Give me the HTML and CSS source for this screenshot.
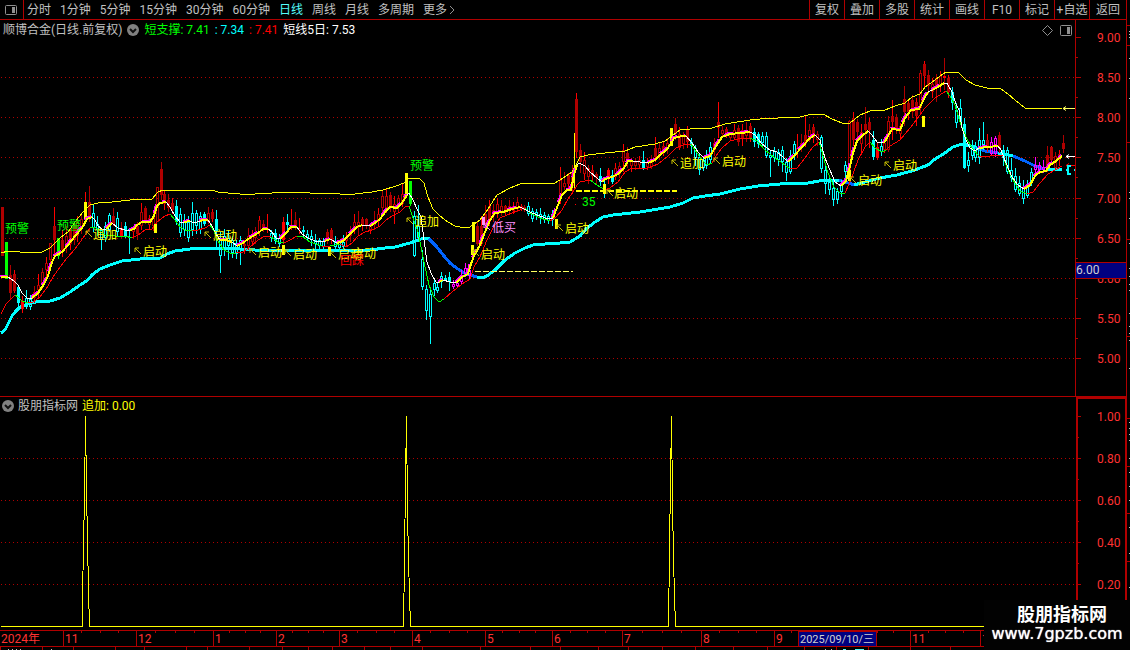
FILE: index.html
```html
<!DOCTYPE html>
<html lang="zh-CN">
<head>
<meta charset="utf-8">
<title>顺博合金 日线</title>
<link rel="stylesheet" href="styles.css">
</head>
<body>
<div class="app">
  <header class="toolbar">
    <button class="layout-btn" aria-label="布局">
      <svg width="12" height="12" viewBox="0 0 12 12"><rect x="0.5" y="1.5" width="11" height="9" rx="1" class="ico-line"/><rect x="7" y="3" width="3" height="6" class="ico-fill"/></svg>
    </button>
    <nav class="periods">
      <button>分时</button><button>1分钟</button><button>5分钟</button><button>15分钟</button><button>30分钟</button><button>60分钟</button><button class="active">日线</button><button>周线</button><button>月线</button><button>多周期</button><button class="more">更多<svg width="7" height="10" viewBox="0 0 7 10"><path d="M1 1L5 5L1 9" class="ico-line"/></svg></button>
    </nav>
    <nav class="tools">
      <button>复权</button><button>叠加</button><button>多股</button><button>统计</button><button>画线</button><button>F10</button><button>标记</button><button>+自选</button><button class="back">返回</button>
    </nav>
  </header>

  <section class="panel">
    <svg class="chart" id="price" viewBox="0 20 1130 377"></svg>
    <div class="info">
      <span>顺博合金(日线.前复权)</span>
      <svg class="drop" width="12" height="12" viewBox="0 0 12 12"><circle cx="6" cy="6" r="6"/><path d="M3 5L6 8L9 5"/></svg>
      <span class="green">短支撑: 7.41</span><span class="cyan">: 7.34</span><span class="red">: 7.41</span><span class="white">短线5日: 7.53</span>
      <span class="corner">
        <svg width="11" height="11" viewBox="0 0 11 11"><path d="M5.5 .5L10.5 5.5L5.5 10.5L.5 5.5Z" class="ico-line"/></svg>
        <svg width="12" height="11" viewBox="0 0 12 11"><rect x=".5" y=".5" width="11" height="10" rx="1" class="ico-line"/><rect x="7" y="2" width="3" height="7" class="ico-fill"/></svg>
      </span>
    </div>
  </section>

  <section class="panel">
    <svg class="chart" id="signal" viewBox="0 397 1130 233"></svg>
    <div class="info sub">
      <svg class="drop" width="12" height="12" viewBox="0 0 12 12"><circle cx="6" cy="6" r="6"/><path d="M3 5L6 8L9 5"/></svg>
      <span>股朋指标网</span><span class="yellow">追加: 0.00</span>
    </div>
  </section>

  <footer class="timeline"><svg class="chart" id="time" viewBox="0 630 1130 20"></svg></footer>

  <div class="brand"><strong>股朋指标网</strong><span>www.7gpzb.com</span></div>
</div>
<script src="chart.js"></script>
</body>
</html>
```
FILE: styles.css
```css
* { box-sizing: border-box; }
body { margin: 0; background: #000; color: #c0c0c0; font: 12px/18px Roboto, "Noto Sans CJK SC", sans-serif; }
button { margin: 0; padding: 0; border: 0; background: none; color: inherit; font: inherit; white-space: nowrap; }
.app { position: relative; height: 100vh; overflow: hidden; display: grid; grid-template-rows: 20px minmax(0, 377fr) minmax(0, 233fr) 20px; }

.toolbar { display: flex; border-bottom: 1px solid #b00000; margin-right: 3px; border-right: 1px solid #b00000; }
.layout-btn { width: 24px; padding-right: 2px; border-right: 1px solid #b00000; display: flex; align-items: center; justify-content: center; }
.periods { display: flex; gap: 9px; padding-left: 3px; }
.active { color: #54fcfc; }
.more { display: flex; align-items: center; gap: 2px; }
.tools { display: flex; margin-left: auto; }
.tools button { width: 35px; border-left: 1px solid #b00000; }
.tools .back { width: 37px; }
.ico-line { fill: none; stroke: #909090; }
.ico-fill { fill: #909090; }

.panel { display: grid; min-height: 0; }
.panel > * { grid-area: 1 / 1; min-height: 0; }
.chart { display: block; width: 100%; height: 100%; overflow: hidden; }
.info { display: flex; align-items: center; align-self: start; gap: 5px; height: 20px; padding: 0 58px 0 3px; }
.sub { gap: 4px; height: 17px; padding-left: 2px; }
.drop circle { fill: #808080; }
.drop path { fill: none; stroke: #101010; stroke-width: 2; }
.corner { display: flex; gap: 7px; margin-left: auto; }
.green { color: #00ff00; }
.cyan { color: #00ffff; }
.red { color: #ff0000; }
.white { color: #fff; }
.yellow { color: #ffff00; }
.timeline { min-height: 0; }

.lbl { font-size: 12px; dominant-baseline: central; }
.date { font-size: 11px; }
.brand { position: absolute; right: 0; bottom: 0; width: 146px; height: 50px; background: #020202; color: #fff; display: flex; flex-direction: column; align-items: center; padding-top: 5px; }
.brand strong { font-size: 18px; line-height: 20px; padding-left: 10px; }
.brand span { font: 16px/17px "DejaVu Sans", sans-serif; text-shadow: 0 0 1px #fff; }
```
FILE: chart.js
```js
const NS = 'http://www.w3.org/2000/svg';
const RED = '#b00000';
const COLORS = { r: RED, R: RED, B: '#ff0000', c: '#00ffff', C: '#00ffff', y: '#ffff00', g: '#00ff00', m: '#ff00ff' };

function add(svg, tag, attrs, text) {
  const el = document.createElementNS(NS, tag);
  for (const k in attrs) el.setAttribute(k, attrs[k]);
  if (text) el.textContent = text;
  svg.appendChild(el);
  return el;
}
const box = (s, x, y, w, h, fill) => add(s, 'rect', { x, y, width: w, height: h, fill });
const line = (s, pts, stroke, width = 1, extra = {}) =>
  add(s, 'polyline', { points: pts, fill: 'none', stroke, 'stroke-width': width, 'shape-rendering': 'crispEdges', ...extra });
const label = (s, x, y, text, fill, cls = 'lbl') => add(s, 'text', { x, y, fill, class: cls }, text);

const price = document.getElementById('price');
const signal = document.getElementById('signal');
const time = document.getElementById('time');

/* one entry per day: kind, high, body top, body bottom, low */
const days = `R207,207,256,256 g242,242,279,279 R265,275,293,300 R270,274,291,293 C285,287,303,306 B296,301,309,313 c290,298,307,309 c295,299,307,310 r286,292,298,303 r274,285,290,297
r268,272,284,289 r257,263,270,277 r243,243,260,264 R207,226,240,256 g238,238,256,259 R230,240,250,257 r226,236,246,253 R228,231,244,250 R222,226,240,245 r216,222,236,242
r213,219,228,234 y192,202,219,219 R186,202,218,222 c205,213,228,232 c216,224,230,236 c228,230,240,250 c222,226,238,242 c213,215,230,232 R208,216,224,226 c212,218,232,236
B222,228,236,238 C222,226,236,238 c228,229,231,254 r226,228,232,238 R222,226,234,240 r203,212,226,230 R206,208,221,224 r215,218,225,230 r212,216,226,231 r187,187,222,222
R162,169,195,200 R190,194,204,210 R194,200,208,212 R198,203,210,214 C200,206,222,225 c208,214,233,237 c214,222,230,236 c216,222,238,242 c202,213,230,236 c210,213,226,234
c212,216,230,234 C212,214,224,226 r207,213,222,224 R209,212,219,222 C210,219,231,247 c232,240,256,273 c229,236,248,256 c230,238,246,260 c236,240,253,258 c240,243,254,259
c236,240,250,265 r240,244,246,254 r228,236,246,250 r230,234,242,246 r227,232,238,244 r216,220,232,236 R220,224,229,232 r214,228,230,233 c230,233,238,242 C229,233,241,244
c234,238,244,247 B217,222,240,244 C214,222,225,232 B209,226,228,230 R212,220,226,230 B218,228,229,234 c226,230,232,238 c230,234,238,240 c230,236,240,246 c234,240,244,250
c238,240,246,250 c238,241,247,250 R229,232,241,244 R228,230,240,244 c236,241,247,249 c240,242,248,250 c235,242,247,250 r232,238,241,246 r226,232,236,242 r214,222,228,234
r211,222,227,236 R217,219,226,231 R218,219,226,229 r224,226,230,234 r211,222,225,230 r208,214,220,226 r190,196,208,214 r188,196,208,213 R192,195,206,212 r196,204,212,224
r195,198,207,212 r183,194,204,207 y173,173,196,196 g181,181,204,206 c211,216,256,257 c205,226,238,242 c250,259,287,290 c285,289,311,320 c290,294,317,344 c278,283,290,296
c283,287,291,293 c272,276,282,288 c275,278,279,281 C272,277,282,291 m280,284,287,289 m278,283,286,288 m270,275,282,285 m263,268,274,277 m268,270,276,280 y222,222,242,242
R222,226,244,246 R216,226,244,246 R205,214,224,230 R200,206,222,226 r204,210,216,222 r198,204,213,218 r200,206,212,216 R205,206,212,215 r200,206,210,213 R202,206,211,214
r197,202,209,212 r204,206,209,211 R205,207,210,212 c202,206,214,216 c208,211,219,222 c209,212,216,220 c208,214,218,224 c212,215,220,223 c214,216,221,224 c210,214,220,226
y219,219,228,228 r167,180,196,204 r172,183,187,190 R173,175,184,188 r165,172,186,193 R93,99,152,158 R144,150,162,173 r152,160,174,180 r165,168,177,184 R165,170,176,182
R172,174,178,184 C168,176,182,186 c181,186,190,198 B168,170,178,184 C170,175,182,184 r163,168,177,180 r162,166,174,178 r144,150,162,172 R147,153,162,168 r158,160,166,172
r158,162,166,170 r156,160,165,168 C151,160,168,170 r158,162,167,170 r155,160,167,169 R137,148,157,162 r143,148,156,160 R141,146,152,156 r138,143,148,154 y128,128,146,146
R118,124,134,140 R127,134,148,150 r132,136,144,149 R126,130,142,148 C138,142,146,154 c145,148,158,166 c154,157,170,175 c158,160,168,171 c150,156,166,169 c142,147,160,164
r138,143,150,156 R102,122,128,138 r126,130,134,138 R127,129,133,138 r132,134,138,140 r124,130,138,140 R125,128,142,146 R124,130,138,146 r122,130,136,142 R123,126,138,142
C128,132,142,147 C132,134,144,148 c132,136,143,148 c132,136,156,158 c150,155,158,177 c147,151,158,162 c149,152,160,166 c146,150,162,172 c158,162,173,181 c150,156,172,174
c141,144,154,160 r134,148,152,158 r134,143,148,152 R116,135,144,147 r124,130,140,142 R124,127,138,143 r131,134,140,146 c135,137,169,173 c165,170,184,194 c178,182,190,195
c180,188,200,206 c188,191,200,204 c180,184,192,197 c161,165,172,180 r120,121,180,182 R112,118,140,146 R119,122,132,140 r124,132,144,153 R107,124,130,146 R118,122,130,148
C131,140,157,160 B142,147,158,160 c139,146,152,156 r138,143,150,153 r116,121,150,152 R100,116,122,140 R114,117,130,134 r123,126,134,140 R86,99,112,126 R100,103,112,120
R95,100,112,118 R98,102,116,126 r70,73,108,114 R61,64,76,87 R70,75,86,94 r78,84,92,98 R74,78,88,102 r71,76,86,92 B58,76,78,90 R75,78,92,98
C87,92,103,110 c103,110,123,128 c99,108,122,124 C118,124,168,169 c152,160,166,172 c140,146,156,160 c142,146,158,162 c128,140,158,164 c122,140,145,150 R134,140,148,152
m137,142,154,156 m136,138,154,157 R132,135,148,153 C145,150,158,166 c147,150,172,174 c158,170,178,182 c168,176,190,192 c176,183,194,196 c180,188,199,204 c180,186,196,198
c168,172,183,186 m157,165,170,176 m162,165,170,174 m160,167,170,173 R146,155,168,172 R146,147,160,165 r152,156,168,170 r150,154,160,166 R135,143,149,153`.split(/\s+/);

function horizontalGrid(svg, rows, right) {
  for (const y of rows) {
    for (let x = 1; x < right; x += 4) box(svg, x, y, 1, 1, RED);
  }
}

/* price panel */
horizontalGrid(price, [77, 117, 157, 198, 238, 278, 318, 358], 1075);
line(price, '1,333 5,330 8,324 12,316 16,311 20,307 28,304 36,302 50,301 60,298 70,292 80,285 88,280 92,275 100,269 110,265 122,261 140,259 160,258 167,254 175,251 190,249 215,248 240,249 255,250 300,250 340,250 370,250 385,248 395,247 410,243 418,240 424,238 430,239', '#00ffff', 3);
line(price, '429,239 436,246 444,256 450,263 458,269 466,274 477,277', '#0064ff', 3);
line(price, '477,277 482,278 487,276 495,270 505,260 515,253 525,248 533,245 545,244 560,243 570,242 580,236 586,229 595,222 603,217 613,215 640,212 670,207 683,203 693,198 705,196 720,194 740,189 758,186 780,184 808,183 825,180 839,180', '#00ffff', 3);
line(price, '839,180 848,183 855,185', '#0064ff', 3);
line(price, '854,185 865,182 880,178 897,175 915,170 928,165 935,159 945,153 953,147 962,144 975,147', '#00ffff', 3);
line(price, '973,147 985,151 998,153', '#0064ff', 3);
line(price, '998,153 1009,155 1013,156', '#00ffff', 3);
line(price, '1013,156 1025,161 1035,166 1045,169', '#0064ff', 3);
line(price, '1046,169 1062,170', '#00ffff', 3);

days.forEach((d, i) => {
  const kind = d[0];
  const [hi, top, bottom, low] = d.slice(1).split(',').map(Number);
  const x = Math.round(2.3 + i * 3.956);
  const color = COLORS[kind];
  const wick = 'rRBy'.includes(kind) ? (i % 2 ? '#ff0000' : RED) : color;
  box(price, x, hi, 1, top - hi, wick);
  box(price, x, bottom, 1, low - bottom, wick);
  if ('rcm'.includes(kind)) {
    add(price, 'rect', { x: x - 0.5, y: top + 0.5, width: 2, height: Math.max(bottom - top - 1, 1), fill: 'none', stroke: color, 'shape-rendering': 'crispEdges' });
  } else {
    box(price, x - 1, top, 3, bottom - top, color);
  }
});
box(price, 574, 133, 1, 55, '#ffff00');
box(price, 482, 217, 3, 8, '#ff90ff');

line(price, '1,253 8,251 20,252 42,252 50,248 60,238 68,232 75,222 83,212 90,205 98,203 112,202 130,200 152,199 158,192 163,190 180,190 212,190 218,192 228,193 240,194 255,194 290,192 310,193 340,194 355,194 372,192 383,190 396,186 404,183 409,178 420,179 424,183 428,197 433,209 440,216 448,222 455,226 460,227 470,227 474,224 480,220 488,209 497,195 510,188 520,184 528,183 555,183 563,178 572,172 577,163 580,157 588,155 605,153 625,151 635,147 655,144 665,141 672,136 680,130 690,129 712,128 725,124 750,120 760,119 778,118 800,117 812,114 823,114 832,119 842,123 850,123 860,115 870,111 885,110 895,106 905,103 912,97 920,94 925,87 935,80 940,76 946,72 958,72 966,80 975,85 987,88 1001,89 1008,94 1015,100 1025,108 1040,108 1046,109 1062,108', '#ffff00');

/* support line: red while rising, green while falling */
const support = [
  'r1,314 6,304 10,300 15,295', 'g15,295 18,297 22,301 28,303', 'r28,303 33,302 40,297 48,286 53,277 60,267 67,258 75,249 83,238 90,228',
  'g90,228 95,227 100,231 105,235 115,236 125,236 132,238', 'r132,238 138,235 145,230 152,229 158,221 165,216 170,214', 'g170,214 175,220 180,227 185,230 192,230',
  'r192,230 198,230 205,228 210,225', 'g210,225 214,231 218,241 224,250 230,253 236,253', 'r236,253 243,252 250,247 258,240 265,236 271,237', 'g271,237 278,242 284,243',
  'r284,243 290,240 297,236', 'g297,236 303,237 310,242 316,244 322,246', 'r322,246 330,246', 'g330,246 340,244',
  'r340,244 346,247 352,243 358,236 365,232 372,230 380,226 386,220 392,216 400,212 405,207 409,206', 'g409,206 413,218 418,232 424,262 429,285 434,297 439,302 444,299',
  'r444,299 452,292 462,284 470,279 474,267 480,257 487,240 493,228 500,218 512,213 525,208', 'g525,208 530,213 540,218 550,221', 'r550,221 556,217 562,210 568,199 573,192 577,185 580,182 590,180',
  'g590,180 597,185 605,190', 'r605,190 610,188 618,182 625,172 632,168 648,168 658,164 668,156 676,148 685,144 691,144', 'g691,144 695,150 702,160 707,165 712,163',
  'r712,163 716,156 722,148 730,141 742,138 750,138', 'g750,138 757,141 765,150 775,158 785,165 790,169', 'r790,169 797,168 805,158 812,148 819,142',
  'g819,142 822,152 828,173 834,187 840,193 845,193', 'r845,193 850,182 858,160 865,147 870,142', 'g870,142 875,148 882,152 886,150', 'r886,150 890,146 900,140 910,128 917,119 925,108 935,98 946,91',
  'g946,91 950,96 955,105 960,122 966,137 972,148 979,156', 'r979,156 985,157 995,155 1003,155', 'g1003,155 1006,165 1013,180 1020,191 1027,194', 'r1027,194 1033,192 1040,183 1048,174 1055,170 1062,166'
];
support.forEach(s => line(price, s.slice(1), s[0] === 'r' ? '#ff0000' : '#00ff00'));

/* five-day line: yellow while rising, white while falling */
const fast = [
  'y1,277 8,277', 'w8,277 14,281 18,285 22,293 27,298 32,298', 'y32,298 38,293 44,284 48,276 52,262 55,256 62,252 68,245 75,236 82,228 87,219 92,217',
  'w92,217 95,220 98,226 102,229 106,229', 'y106,229 112,223', 'w112,223 118,228 125,230 130,230', 'y130,230 134,229 137,225 142,222 150,222 154,216 157,206 160,203 166,202',
  'w166,202 170,207 175,216 180,222 184,222', 'y184,222 190,221', 'w190,221 194,223 200,221', 'y200,221 203,220 208,220', 'w208,220 212,226 216,234 220,240', 'y220,240 226,240 232,242', 'w232,242 237,246',
  'y237,246 243,243 248,239 258,233 263,229 268,229', 'w268,229 272,232 276,238 280,239', 'y280,239 286,233 291,227 297,227', 'w297,227 302,234 308,238 315,241 325,241', 'y325,241 330,239', 'w330,239 337,243',
  'y337,243 343,241 350,234 357,227 362,225', 'w362,225 370,226', 'y370,226 375,223 380,219 386,211 390,207 397,208 402,203 407,195', 'w407,195 409,193 413,200 417,209 421,217 424,240 427,262 431,273 436,282 439,282',
  'y439,282 443,280', 'w443,280 450,282 456,283', 'y456,283 462,277 468,274 471,264 474,256 480,245 485,232 490,220 495,213 503,212 512,209 520,207', 'w520,207 526,210 532,213 540,216 548,219 553,218',
  'y553,218 556,210 562,195 567,190 571,190 574,175 577,165', 'w577,165 579,163 585,166 590,172 597,178 602,182', 'y602,182 605,179 612,177 618,174 624,168 628,161 633,161', 'w633,161 640,162 648,163',
  'y648,163 655,160 660,155 666,150 671,144 674,138 682,136 686,136', 'w686,136 692,143 698,152 704,158', 'y704,158 710,156 716,146 722,137 730,134 740,133 750,132', 'w750,132 755,135 762,144 770,150 777,152 783,157 788,162',
  'y788,162 795,155 802,147 810,138 815,135', 'w815,135 820,140 825,158 830,170 835,182 841,186', 'y841,186 846,181 850,166 853,153 857,141 862,136 868,131', 'w868,131 872,135 877,142 884,143',
  'y884,143 888,136 892,129 900,130 905,118 911,110 919,109 925,97 928,92', 'w928,92 932,90', 'y932,90 938,87 944,83', 'w944,83 947,83 952,92 956,104 959,110 962,128 966,140 970,148 975,151 979,148',
  'y979,148 988,147 998,146', 'w998,146 1001,150 1006,163 1012,177 1018,185 1024,189', 'y1024,189 1030,185 1035,176 1040,172 1046,171 1050,165 1056,161 1062,156'
];
fast.filter(s => s[0] === 'y').forEach(s => line(price, s.slice(1), '#ff00ff', 2, { 'stroke-dasharray': '9 7', transform: 'translate(-1 -1)' }));
fast.forEach(s => (s[0] === 'y' ? line(price, s.slice(1), '#ffff00', 2) : line(price, s.slice(1), '#ffffff', 1)));

/* signal bars and level lines */
[[154, 224, 9], [282, 245, 10], [328, 247, 9], [471, 245, 10], [555, 219, 10], [603, 184, 10], [848, 170, 11], [922, 116, 11]].forEach(([x, y, h]) => box(price, x, y, 3, h, '#ffff00'));
line(price, '475,271.5 573,271.5', '#ffff60', 1, { 'stroke-dasharray': '6 2' });
line(price, '576,191 677,191', '#ffff00', 2, { 'stroke-dasharray': '6 2' });
box(price, 575, 204, 1, 1, '#ff0000');

/* marks: text, text x, centre y, colour, arrow x, arrow y */
[
  ['预警', 5, 229, '#00ff00'], ['预警', 57, 226, '#00ff00'], ['预警', 410, 166, '#00ff00'], ['35', 582, 202, '#00ff00'],
  ['追加', 93, 235, '#ffff00', 86, 231], ['启动', 143, 252, '#ffff00', 135, 248], ['启动', 213, 236, '#ffff00', 205, 232],
  ['启动', 258, 253, '#ffff00', 250, 249], ['启动', 293, 255, '#ffff00', 285, 250], ['启动', 338, 255, '#ffff00', 330, 252],
  ['启动', 352, 254, '#ffff00'], ['回踩', 340, 261, '#ff0000'], ['追加', 415, 222, '#ffff00', 407, 218],
  ['低买', 492, 228, '#ff90ff', 484, 224], ['启动', 481, 255, '#ffff00', 473, 250], ['启动', 565, 229, '#ffff00', 557, 225],
  ['启动', 614, 194, '#ffff00', 607, 190], ['追加', 680, 164, '#ffff00', 672, 160], ['启动', 722, 162, '#ffff00', 714, 158],
  ['启动', 858, 181, '#ffff00', 850, 177], ['启动', 893, 166, '#ffff00', 885, 162]
].forEach(([text, x, y, color, ax, ay]) => {
  label(price, x, y, text, color);
  if (ax) add(price, 'path', { d: `M${ax} ${ay + 4}V${ay}H${ax + 4}M${ax} ${ay}L${ax + 6} ${ay + 6}`, fill: 'none', stroke: color === '#ffff00' ? '#c8c000' : color });
});

/* last-value arrows */
[[108.5, '#ffff60', 1063], [156.5, '#ffffff', 1066], [165.5, '#ff0000', 1066]].forEach(([y, c, x]) =>
  add(price, 'path', { d: `M1075 ${y}H${x}M${x + 3} ${y - 2}L${x} ${y}L${x + 3} ${y + 2}`, fill: 'none', stroke: c }));
add(price, 'path', { d: 'M1071 166H1068V174H1071M1066 170H1068M1074 170H1075', fill: 'none', stroke: '#00ffff', 'stroke-width': 2 });

/* price axis */
box(price, 1075, 20, 1, 376, RED);
[37, 77, 117, 157, 198, 238, 278, 318, 358].forEach((y, i) => {
  box(price, 1076, y, 5, 1, RED);
  if (i < 8) box(price, 1076, y + 20, 2, 1, RED);
  label(price, 1097, y + 1, (9 - i * 0.5).toFixed(2), '#ff3232');
});
box(price, 1075, 262, 52, 17, RED);
box(price, 1076, 263, 50, 15, '#000080');
label(price, 1076, 270, '6.00', '#d0d0d0');
box(price, 0, 396, 1127, 1, RED);
box(price, 1126, 20, 1, 376, RED);
[25, 45, 142, 239, 336].forEach(y => box(price, 1127, y, 3, 1, RED));
[31, 34, 37, 58, 78, 98, 192, 198, 218, 243, 268, 276, 284, 290, 313, 326, 333, 340, 368].forEach(y => box(price, 1129, y, 1, 1, '#c0c0c0'));

/* signal panel */
horizontalGrid(signal, [458, 500, 542, 584], 1076);
line(signal, '1,626.5 82.5,626.5 82.5,602 83.5,540 84.5,500 85.5,416 86.5,490 87.5,540 88.5,590 89.5,626.5 403.5,626.5 404.5,560 405.5,480 406.5,416 407.5,510 408.5,560 410.5,626.5 668.5,626.5 669.5,550 670.5,480 671.5,416 672.5,500 673.5,560 675.5,626.5 1075,626.5', '#ffff00');
box(signal, 1076, 397, 2, 233, RED);
box(signal, 1076, 397, 50, 2, RED);
box(signal, 1125, 397, 2, 233, RED);
['1.00', '0.80', '0.60', '0.40', '0.20'].forEach((t, i) => {
  const y = 416 + i * 42;
  box(signal, 1078, y, 3, 1, RED);
  box(signal, 1078, y + 21, 1, 1, RED);
  label(signal, 1097, y + 1, t, '#ff3232');
});
[418, 466, 513, 561].forEach(y => box(signal, 1127, y, 3, 1, RED));
[422, 428, 434, 440, 458, 472, 486, 500, 527, 553, 587].forEach(y => box(signal, 1129, y, 1, 1, '#c0c0c0'));

/* time axis */
box(time, 0, 630, 1130, 1, RED);
box(time, 0, 646, 1130, 1, RED);
label(time, 1, 639, '2024年', '#ff3232');
const months = [[63, '11'], [136, '12'], [213, '1'], [276, '2'], [339, '3'], [412, '4'], [485, '5'], [552, '6'], [622, '7'], [701, '8'], [774, '9'], [843, ''], [910, '11'], [980, '12']];
months.forEach(([x, t], i) => {
  box(time, x, 631, 1, 15, RED);
  if (t) label(time, x + 2, 639, t, '#ff3232');
  const next = i + 1 < months.length ? months[i + 1][0] : x + 73;
  for (let k = 1; k < 4; k++) box(time, Math.round(x + (next - x) * k / 4), 631, 1, 2, RED);
});
box(time, 798, 631, 79, 15, RED);
box(time, 799, 632, 77, 14, '#000080');
label(time, 800, 639, '2025/09/10/三', '#d0d0d0', 'lbl date');
[0, 42, 73, 115, 144, 186, 207, 249, 282, 308, 332, 364, 390, 422, 480, 530, 560, 598, 628, 662, 695, 733, 767, 804, 836, 868, 910, 950].forEach(x => box(time, x, 647, 1, 3, RED));
[8, 12, 16, 20, 51, 825, 831].forEach(x => box(time, x, 649, 1, 1, '#c0c0c0'));
box(time, 843, 649, 3, 1, '#54fcfc');
box(time, 855, 649, 9, 1, '#54fcfc');
```
